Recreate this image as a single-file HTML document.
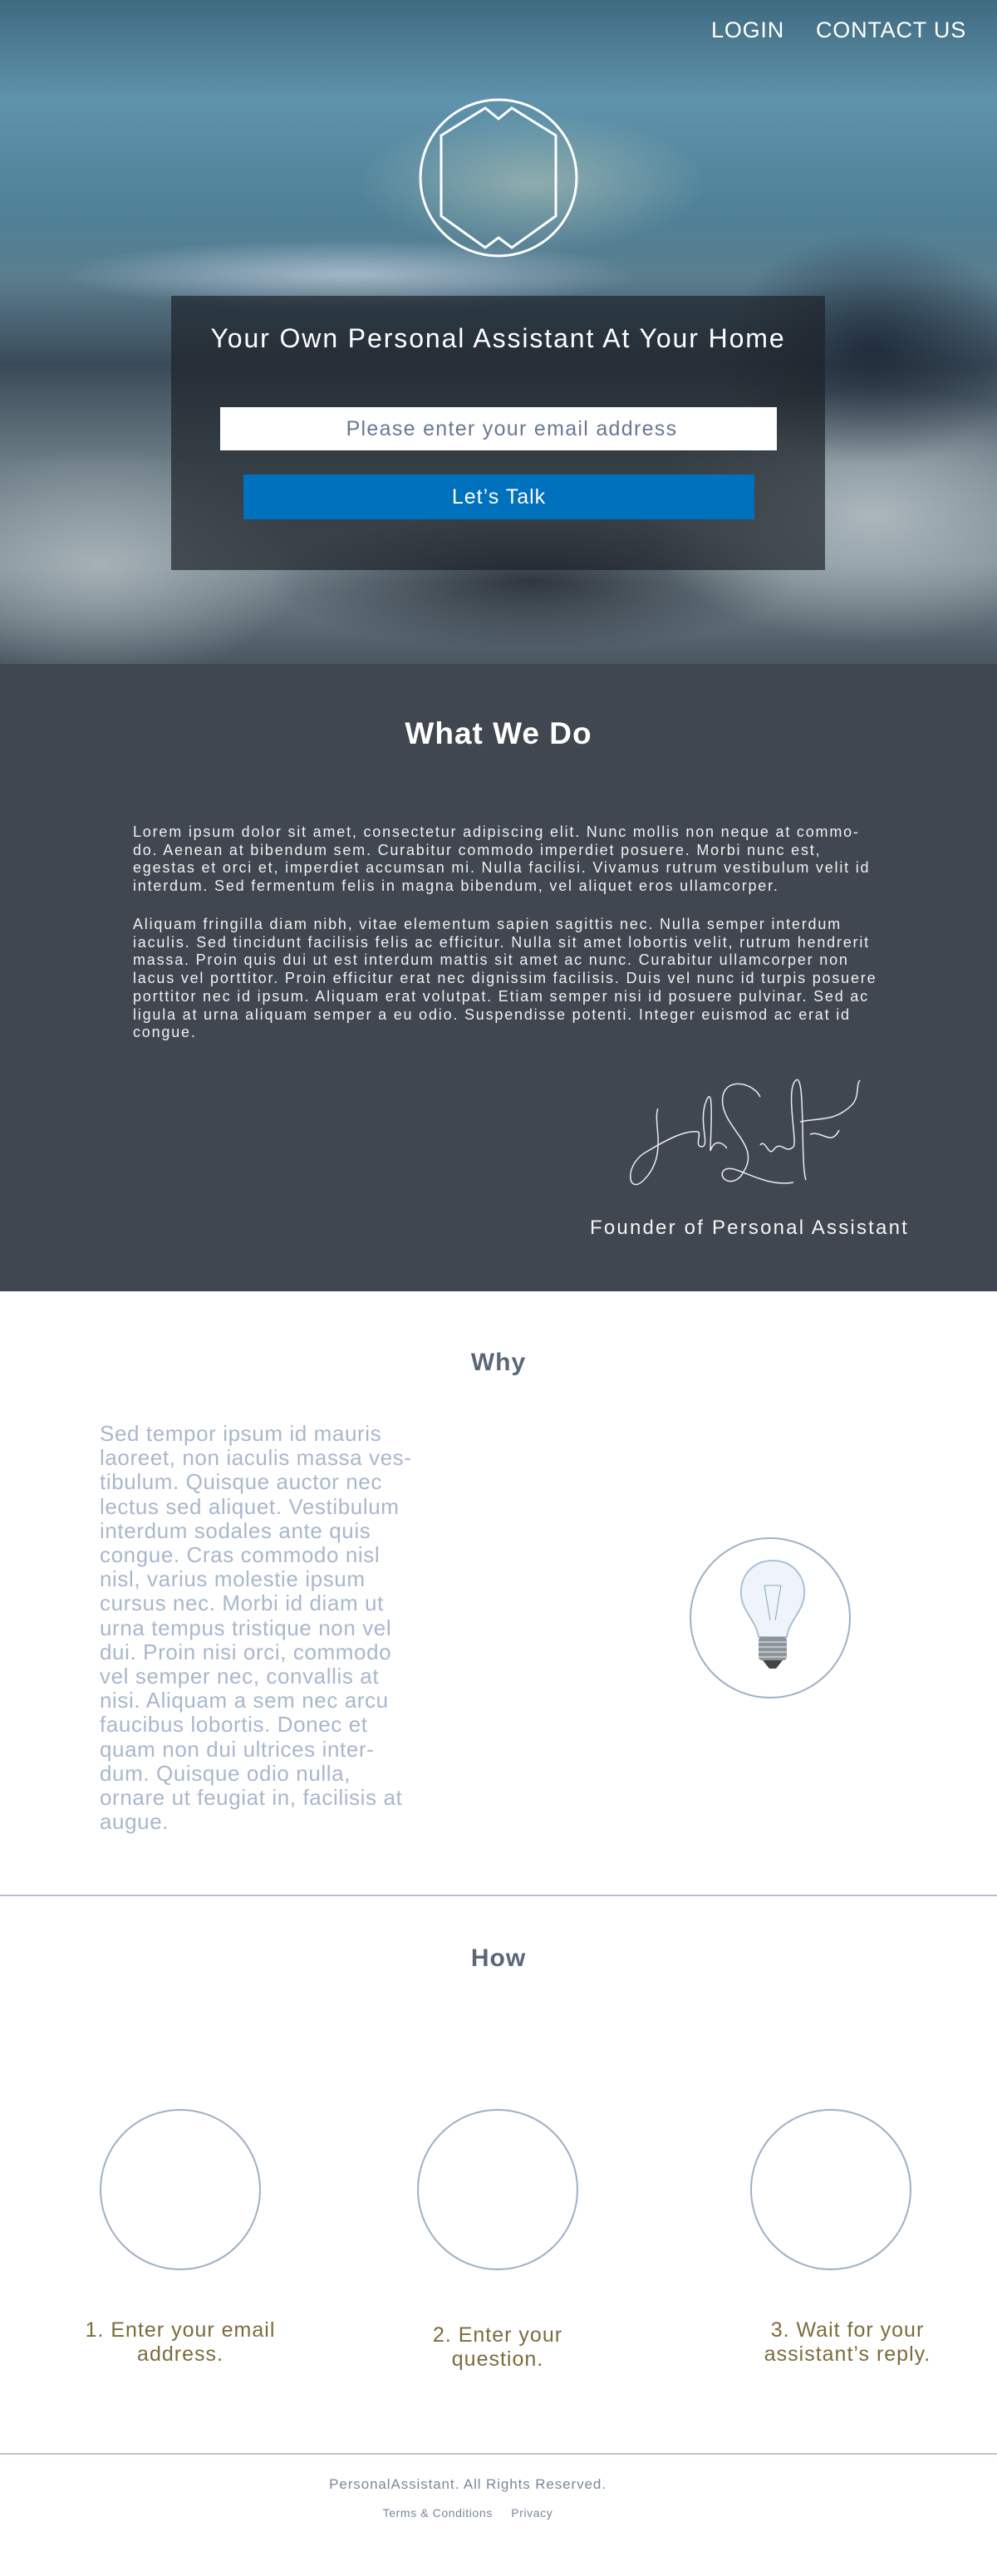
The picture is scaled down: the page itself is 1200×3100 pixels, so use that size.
<!DOCTYPE html>
<html><head><meta charset="utf-8"><style>
*{margin:0;padding:0;box-sizing:border-box}
body{width:1200px;height:3100px;position:relative;font-family:"Liberation Sans",sans-serif;background:#fff;overflow:hidden}
.abs{position:absolute}
.hero{left:0;top:0;width:1200px;height:799px;overflow:hidden;
background:
radial-gradient(ellipse 300px 120px at 640px 220px,rgba(200,210,190,.5),transparent 70%),
radial-gradient(ellipse 500px 60px at 420px 330px,rgba(220,230,245,.55),transparent 70%),
radial-gradient(ellipse 260px 200px at 1050px 420px,rgba(20,30,45,.7),transparent 70%),
radial-gradient(ellipse 400px 220px at 1050px 620px,rgba(190,200,205,.75),transparent 70%),
radial-gradient(ellipse 350px 200px at 120px 680px,rgba(180,190,195,.75),transparent 70%),
radial-gradient(ellipse 450px 120px at 640px 700px,rgba(25,30,40,.75),transparent 70%),
linear-gradient(180deg,#3f6a80 0%,#5f93ab 15%,#4f8198 32%,#5a7d8e 42%,#3a4a58 55%,#6d7d86 70%,#7a8a92 85%,#4a5660 100%)}
.nav{top:21px;color:#fff;font-size:27px;letter-spacing:.8px}
.box{left:206px;top:356px;width:787px;height:330px;background:rgba(28,32,38,.68)}
.dark{left:0;top:799px;width:1200px;height:755px;background:#414750}
.lorem{position:absolute;left:160px;color:#f0f0f0;font-size:18px;letter-spacing:1.8px;line-height:21.7px;white-space:nowrap}
.why{left:120px;top:1711px;color:#a9b7cc;font-size:26px;line-height:29.2px;white-space:nowrap;letter-spacing:.6px}
.step{color:#7b6c3c;font-size:25px;line-height:29px;text-align:center;width:340px;letter-spacing:1px}
.ring{border:2px solid #9fb0c4;border-radius:50%;width:194px;height:194px}
</style></head><body>
<div class="abs hero">
  <div class="abs nav" style="left:856px">LOGIN</div>
  <div class="abs nav" style="left:982px">CONTACT US</div>
  <svg class="abs" style="left:500px;top:112px" width="200" height="206" viewBox="0 0 200 206">
    <circle cx="100" cy="102" r="94" fill="none" stroke="#fff" stroke-width="3"/>
    <polygon points="31,49 84,16 100,29 116,16 169,49 169,146 116,184 100,172 84,184 31,146" fill="none" stroke="#fff" stroke-width="3" transform="translate(0,2)"/>
  </svg>
  <div class="abs box"></div>
  <div class="abs" style="left:206px;top:389px;width:787px;text-align:center;color:#fff;font-size:32px;letter-spacing:1.9px">Your Own Personal Assistant At Your Home</div>
  <div class="abs" style="left:265px;top:490px;width:670px;height:52px;background:#fff"></div>
  <div class="abs" style="left:281px;top:490px;width:670px;height:52px;text-align:center;line-height:52px;color:#6a7890;font-size:25px;letter-spacing:1.3px">Please enter your email address</div>
  <div class="abs" style="left:293px;top:571px;width:615px;height:54px;background:#0071bc;text-align:center;line-height:54px;color:#fff;font-size:25px;letter-spacing:1px">Let’s Talk</div>
</div>
<div class="abs dark"></div>
<div class="abs" style="left:0;top:862px;width:1200px;text-align:center;color:#fff;font-size:37px;font-weight:bold;letter-spacing:1px">What We Do</div>
<div class="lorem" style="top:991px">Lorem ipsum dolor sit amet, consectetur adipiscing elit. Nunc mollis non neque at commo-<br>do. Aenean at bibendum sem. Curabitur commodo imperdiet posuere. Morbi nunc est,<br>egestas et orci et, imperdiet accumsan mi. Nulla facilisi. Vivamus rutrum vestibulum velit id<br>interdum. Sed fermentum felis in magna bibendum, vel aliquet eros ullamcorper.</div>
<div class="lorem" style="top:1102px">Aliquam fringilla diam nibh, vitae elementum sapien sagittis nec. Nulla semper interdum<br>iaculis. Sed tincidunt facilisis felis ac efficitur. Nulla sit amet lobortis velit, rutrum hendrerit<br>massa. Proin quis dui ut est interdum mattis sit amet ac nunc. Curabitur ullamcorper non<br>lacus vel porttitor. Proin efficitur erat nec dignissim facilisis. Duis vel nunc id turpis posuere<br>porttitor nec id ipsum. Aliquam erat volutpat. Etiam semper nisi id posuere pulvinar. Sed ac<br>ligula at urna aliquam semper a eu odio. Suspendisse potenti. Integer euismod ac erat id<br>congue.</div>
<svg class="abs" style="left:745px;top:1290px" width="340" height="160" viewBox="0 0 340 160" fill="none" stroke="#e8ecf2" stroke-width="1.5">
  <path d="M47,44 C40,60 60,100 30,130 C10,150 5,110 35,95 C60,80 80,70 95,72 C100,74 90,90 100,90 C110,88 95,60 105,35 C115,10 110,80 110,95 C115,80 125,85 130,92"/>
  <path d="M170,30 C160,10 120,5 125,40 C130,70 170,90 150,120 C140,140 120,130 125,120 C135,105 170,140 210,133"/>
  <path d="M170,88 C175,80 180,100 185,95 C195,80 200,100 210,90 M210,90 C215,85 200,20 213,10 C225,0 218,110 225,130 M218,60 C240,55 260,60 280,40 C290,30 285,15 290,10 M230,75 C245,70 255,90 265,70"/>
</svg>
<div class="abs" style="left:710px;top:1464px;color:#f4f4f4;font-size:24px;letter-spacing:2.2px">Founder of Personal Assistant</div>
<div class="abs" style="left:0;top:1623px;width:1200px;text-align:center;color:#5b6678;font-size:30px;font-weight:bold;letter-spacing:1px">Why</div>
<div class="abs why">Sed tempor ipsum id mauris<br>laoreet, non iaculis massa ves-<br>tibulum. Quisque auctor nec<br>lectus sed aliquet. Vestibulum<br>interdum sodales ante quis<br>congue. Cras commodo nisl<br>nisl, varius molestie ipsum<br>cursus nec. Morbi id diam ut<br>urna tempus tristique non vel<br>dui. Proin nisi orci, commodo<br>vel semper nec, convallis at<br>nisi. Aliquam a sem nec arcu<br>faucibus lobortis. Donec et<br>quam non dui ultrices inter-<br>dum. Quisque odio nulla,<br>ornare ut feugiat in, facilisis at<br>augue.</div>
<div class="abs ring" style="left:830px;top:1850px"></div>
<svg class="abs" style="left:880px;top:1870px" width="100" height="150" viewBox="0 0 100 150">
  <path d="M50,8 C25,8 10,28 12,50 C14,70 30,80 33,100 L67,100 C70,80 86,70 88,50 C90,28 75,8 50,8Z" fill="#eef4fa" stroke="#a9c0d6" stroke-width="2"/>
  <path d="M40,38 L47,80 M60,38 L53,80 M40,38 L60,38" stroke="#8aa" fill="none"/>
  <rect x="33" y="100" width="34" height="28" rx="4" fill="#8d959c"/>
  <path d="M33,106h34M33,112h34M33,118h34M33,124h34" stroke="#cfd4d8" stroke-width="1.5"/>
  <path d="M38,128 L62,128 L54,138 L46,138Z" fill="#444"/>
</svg>
<div class="abs" style="left:0;top:2280px;width:1200px;height:2px;background:#b8c2cf"></div>
<div class="abs" style="left:0;top:2340px;width:1200px;text-align:center;color:#5b6678;font-size:30px;font-weight:bold;letter-spacing:1px">How</div>
<div class="abs ring" style="left:120px;top:2538px"></div>
<div class="abs ring" style="left:502px;top:2538px"></div>
<div class="abs ring" style="left:903px;top:2538px"></div>
<div class="abs step" style="left:47px;top:2790px">1. Enter your email<br>address.</div>
<div class="abs step" style="left:429px;top:2796px">2. Enter your<br>question.</div>
<div class="abs step" style="left:850px;top:2790px">3. Wait for your<br>assistant’s reply.</div>
<div class="abs" style="left:0;top:2952px;width:1200px;height:2px;background:#b8c2cf"></div>
<div class="abs" style="left:0;top:2980px;width:1126px;text-align:center;color:#7a879c;font-size:17px;letter-spacing:.9px">PersonalAssistant. All Rights Reserved.</div>
<div class="abs" style="left:0;top:3016px;width:1126px;text-align:center;color:#7a879c;font-size:14px;letter-spacing:.6px">Terms &amp; Conditions&nbsp;&nbsp;&nbsp;&nbsp;&nbsp;Privacy</div>
</body></html>
